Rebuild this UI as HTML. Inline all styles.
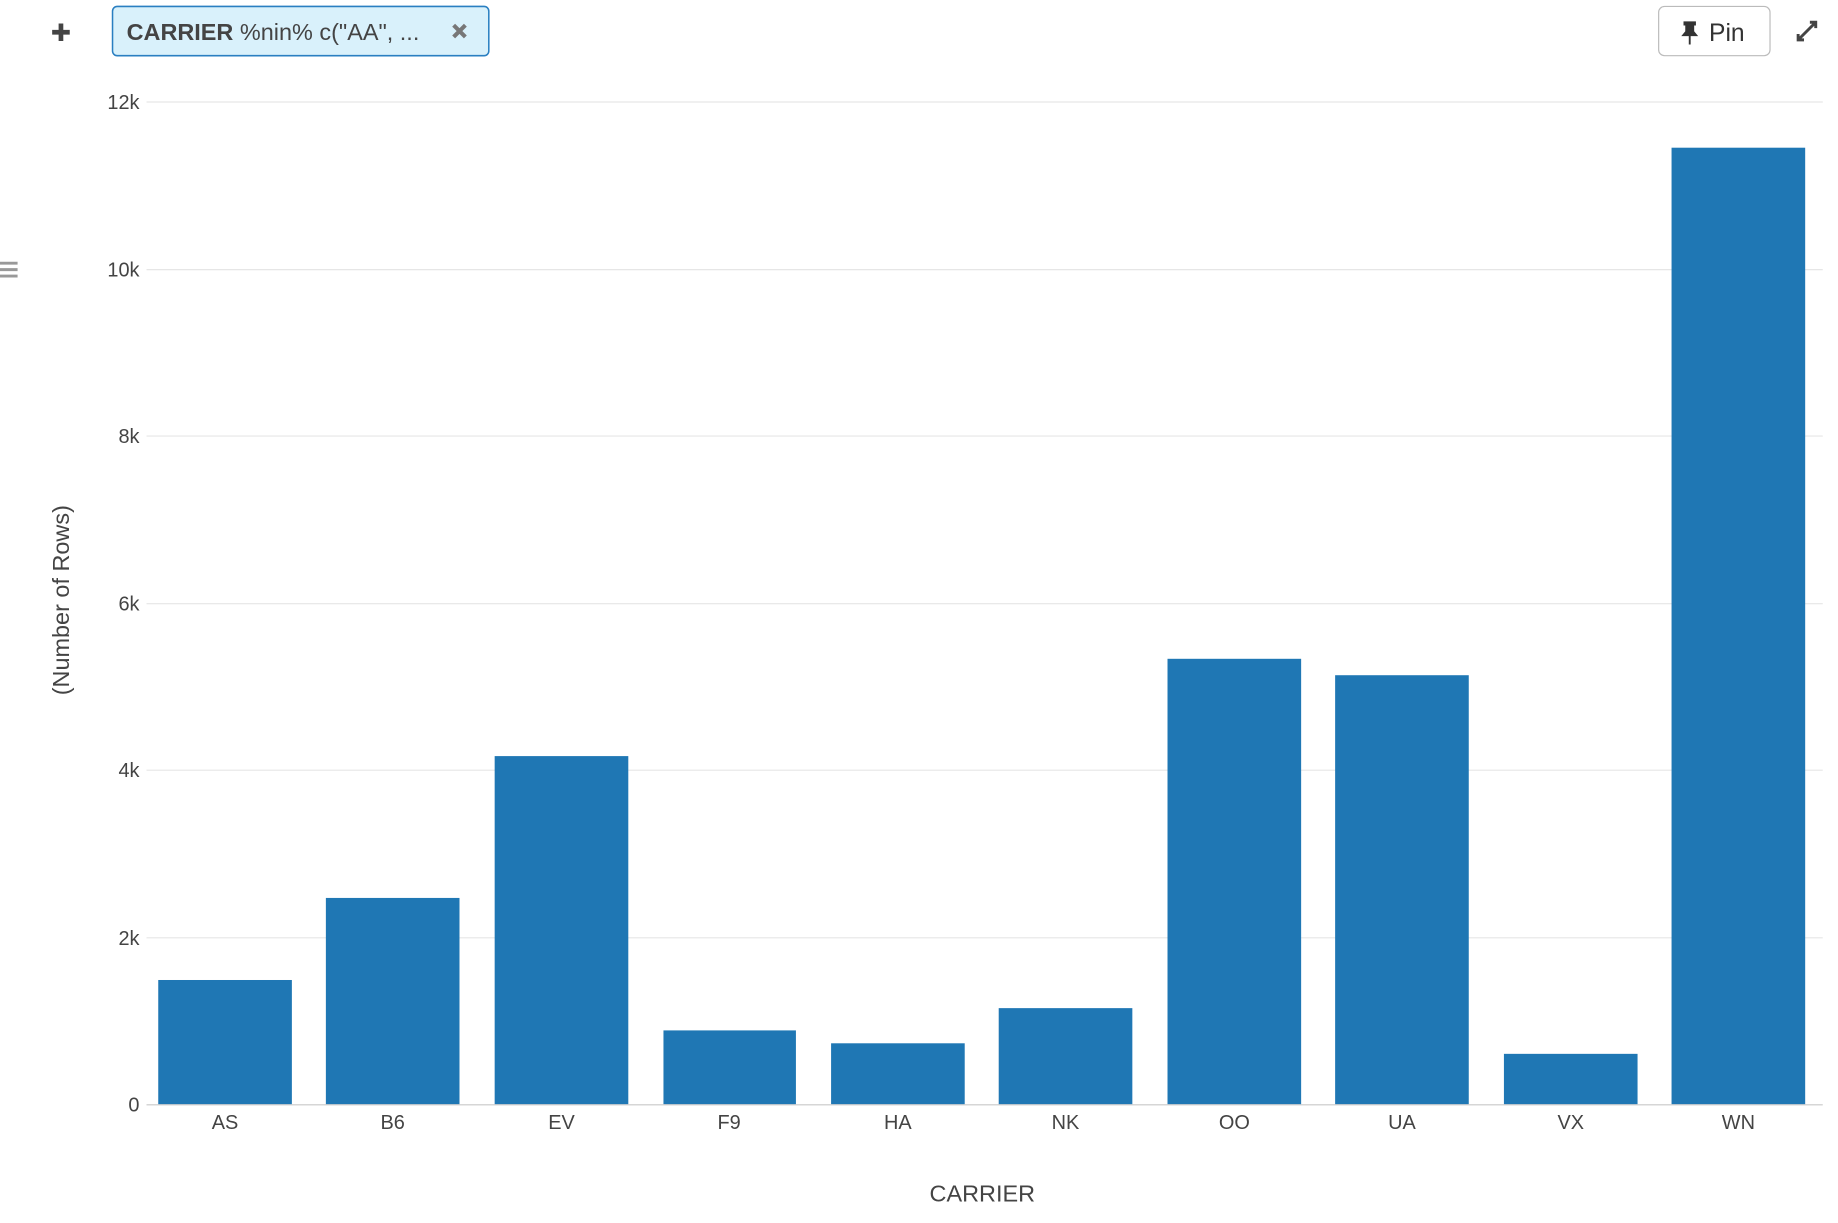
<!DOCTYPE html>
<html><head><meta charset="utf-8"><style>
html,body{margin:0;padding:0;background:#fff;width:1838px;height:1223px;overflow:hidden}
svg{display:block}
</style></head><body>
<svg width="1838" height="1223" viewBox="0 0 1568 1043.3" preserveAspectRatio="none" xmlns="http://www.w3.org/2000/svg" font-family="'Liberation Sans', sans-serif">
<path d="M52 20v15M44.5 27.5h15" stroke="#444" stroke-width="4"/>
<rect x="96" y="5.5" width="321" height="42" rx="4" fill="#d9f1fb" stroke="#2a7fc1" stroke-width="1.3"/>
<text x="108" y="34" font-size="20" fill="#444"><tspan font-weight="bold">CARRIER</tspan> %nin% c("AA", ...</text>
<path d="M387 21.5l10 10M397 21.5l-10 10" stroke="#777" stroke-width="3.5"/>
<rect x="1415" y="5.5" width="95" height="42" rx="5" fill="#fff" stroke="#bbb" stroke-width="1"/>
<path d="M1437 19h9v2h-1.5v6l2.5 3h-11l2.5-3v-6h-1.5zM1441.5 30v8" stroke="#333" stroke-width="1.6" fill="#333"/>
<text x="1458" y="35" font-size="21" fill="#333">Pin</text>
<path d="M1534 34l15-15M1544 19h5v5M1534 29v5h5" stroke="#444" stroke-width="2.5" fill="none"/>
<path d="M0 224.5h15M0 230h15M0 235.5h15" stroke="#999" stroke-width="2.5"/>
<g stroke="#e6e6e6" stroke-width="1">
<line x1="125" x2="1555" y1="87" y2="87"/><line x1="125" x2="1555" y1="230" y2="230"/>
<line x1="125" x2="1555" y1="372" y2="372"/><line x1="125" x2="1555" y1="515" y2="515"/>
<line x1="125" x2="1555" y1="657" y2="657"/><line x1="125" x2="1555" y1="800" y2="800"/>
</g>
<g font-size="17" fill="#444" text-anchor="end">
<text x="119" y="93">12k</text><text x="119" y="236">10k</text><text x="119" y="378">8k</text>
<text x="119" y="521">6k</text><text x="119" y="663">4k</text><text x="119" y="806">2k</text><text x="119" y="948">0</text>
</g>
<g fill="#1f77b4">
<rect x="135" y="836" width="114" height="106"/>
<rect x="278" y="766" width="114" height="176"/>
<rect x="422" y="645" width="114" height="297"/>
<rect x="566" y="879" width="113" height="63"/>
<rect x="709" y="890" width="114" height="52"/>
<rect x="852" y="860" width="114" height="82"/>
<rect x="996" y="562" width="114" height="380"/>
<rect x="1139" y="576" width="114" height="366"/>
<rect x="1283" y="899" width="114" height="43"/>
<rect x="1426" y="126" width="114" height="816"/>
</g>
<line x1="125" x2="1555" y1="942.5" y2="942.5" stroke="#c8c8c8" stroke-width="1"/>
<g font-size="17" fill="#444" text-anchor="middle">
<text x="192" y="963">AS</text><text x="335" y="963">B6</text><text x="479" y="963">EV</text>
<text x="622" y="963">F9</text><text x="766" y="963">HA</text><text x="909" y="963">NK</text>
<text x="1053" y="963">OO</text><text x="1196" y="963">UA</text><text x="1340" y="963">VX</text>
<text x="1483" y="963">WN</text>
<text x="838" y="1025" font-size="20">CARRIER</text>
<text transform="translate(59,512) rotate(-90)" font-size="20">(Number of Rows)</text>
</g>
</svg>
</body></html>
